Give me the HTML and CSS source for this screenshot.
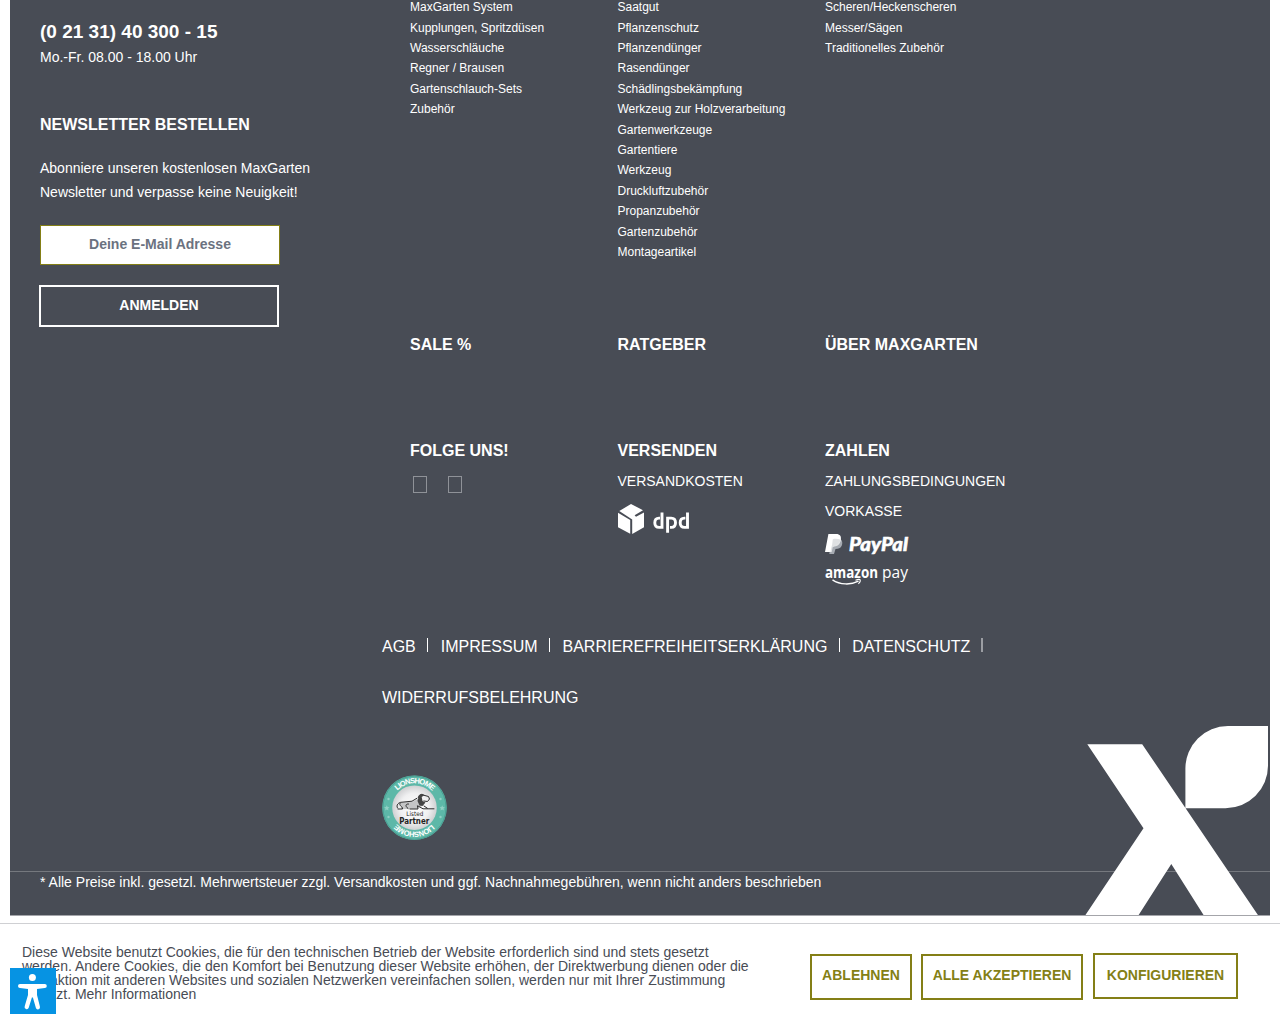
FILE: index.html
```html
<!DOCTYPE html>
<html lang="de">
<head>
<meta charset="utf-8">
<title>MaxGarten</title>
<link rel="stylesheet" href="styles.css">
</head>
<body>
<footer class="footer">
  <div class="footer-main">
    <section class="contact">
      <p class="phone">(0 21 31) 40 300 - 15</p>
      <p class="hours">Mo.-Fr. 08.00 - 18.00 Uhr</p>
      <h3 class="title newsletter-title">NEWSLETTER BESTELLEN</h3>
      <p class="newsletter-text">Abonniere unseren kostenlosen MaxGarten<br>Newsletter und verpasse keine Neuigkeit!</p>
      <input class="email" type="text" placeholder="Deine E-Mail Adresse">
      <button class="submit">ANMELDEN</button>
    </section>
    <div class="content">
      <div class="columns columns-links">
        <ul class="links">
          <li>MaxGarten System</li><li>Kupplungen, Spritzdüsen</li><li>Wasserschläuche</li><li>Regner / Brausen</li><li>Gartenschlauch-Sets</li><li>Zubehör</li>
        </ul>
        <ul class="links">
          <li>Saatgut</li><li>Pflanzenschutz</li><li>Pflanzendünger</li><li>Rasendünger</li><li>Schädlingsbekämpfung</li><li>Werkzeug zur Holzverarbeitung</li><li>Gartenwerkzeuge</li><li>Gartentiere</li><li>Werkzeug</li><li>Druckluftzubehör</li><li>Propanzubehör</li><li>Gartenzubehör</li><li>Montageartikel</li>
        </ul>
        <ul class="links">
          <li>Scheren/Heckenscheren</li><li>Messer/Sägen</li><li>Traditionelles Zubehör</li>
        </ul>
      </div>
      <div class="columns columns-titles">
        <h3 class="title">SALE %</h3>
        <h3 class="title">RATGEBER</h3>
        <h3 class="title">ÜBER MAXGARTEN</h3>
      </div>
      <div class="columns columns-service">
        <div>
          <h3 class="title">FOLGE UNS!</h3>
          <div class="social"><span class="glyph"></span><span class="glyph"></span></div>
        </div>
        <div>
          <h3 class="title">VERSENDEN</h3>
          <p class="service">VERSANDKOSTEN</p>
          <svg class="dpd" width="72" height="32" viewBox="0 0 72 32">
            <path fill="#fff" d="M13 0 25 6.2 16.6 11.2 18 12.8 26 8.4V23.3L14.2 30V15.4L1.3 7 13 0ZM0 8.7 12.2 15.9V29.7L0 23.3Z"/>
            <g fill="none" stroke="#fff" stroke-width="2.9">
              <path d="M44 8.5V23.4H41.2C38.1 23.4 36.8 21.4 36.8 18.7C36.8 15.9 38.4 14.1 41 14.1H42"/>
              <path d="M49.6 28.8V14.1H53.2C56.3 14.1 57.5 16.1 57.5 18.8C57.5 21.8 55.9 23.4 53.4 23.4H52"/>
              <path d="M69.5 8.5V23.4H66.6C63.5 23.4 62.2 21.4 62.2 18.7C62.2 15.9 63.8 14.1 66.4 14.1H67.4"/>
            </g>
          </svg>
        </div>
        <div>
          <h3 class="title">ZAHLEN</h3>
          <p class="service">ZAHLUNGSBEDINGUNGEN</p>
          <p class="service">VORKASSE</p>
          <svg class="paypal" width="86" height="24" viewBox="0 0 86 24">
            <path fill="#a6abb2" d="M5.5 12 14.8 4.8C17.4 6 17.8 9 16.8 11.6C15.8 14.3 13.4 15 10.5 15L9 20H4.3Z"/>
            <path fill="#dfe1e3" d="M5.6 12.9 7.4 5.6 15.6 4.6C15.9 9.2 13.8 12.3 9.5 12.5L7.7 13.3 6.7 18H4.7Z"/>
            <path fill="#fff" d="M3.4 0H11.2C14.9 0 16.5 2.4 15.8 5.4C14.5 9.8 12 11 8.6 11H7L5.3 17.9H0Z"/>
            <path fill="#dfe1e3" d="M7.8 5.2C10 4.5 13.5 4.8 15.8 5.7C15 9.8 12 11.7 7 11.6Z"/>
            <text x="24" y="17.1" textLength="59" lengthAdjust="spacingAndGlyphs" class="paypal-word">PayPal</text>
          </svg>
          <svg class="amazon" width="86" height="22" viewBox="0 0 86 22">
            <text x="0" y="12" textLength="53" lengthAdjust="spacingAndGlyphs" class="amazon-word">amazon</text>
            <text x="57" y="12.3" textLength="26" lengthAdjust="spacingAndGlyphs" class="pay-word">pay</text>
            <path fill="none" stroke="#fff" stroke-width="1.4" d="M7.5 13.8C15 19 26 19.1 33.5 15.2"/>
            <path fill="none" stroke="#fff" stroke-width="1.1" d="M30.5 14.2C32.6 13.4 35 13.4 35.3 14.1C35.6 15 34.5 16.8 33.4 17.8"/>
          </svg>
        </div>
      </div>
      <nav class="legal">
        <span class="legal-item">AGB</span><span class="legal-item">IMPRESSUM</span><span class="legal-item">BARRIEREFREIHEITSERKLÄRUNG</span><span class="legal-item legal-soft">DATENSCHUTZ</span><span class="legal-last">WIDERRUFSBELEHRUNG</span>
      </nav>
      <svg class="badge" width="66" height="66" viewBox="0 0 66 66">
        <defs>
          <radialGradient id="disc"><stop offset="0" stop-color="#fff"/><stop offset=".65" stop-color="#f0f0f1"/><stop offset="1" stop-color="#cfd0d2"/></radialGradient>
          <path id="arc-top" d="M8.3 32.5A24.2 24.2 0 0 1 56.7 32.5"/>
          <path id="arc-bottom" d="M56.7 32.5A24.2 24.2 0 0 1 8.3 32.5"/>
        </defs>
        <circle cx="32.5" cy="32.7" r="32.3" fill="#5db8a8"/>
        <circle cx="32.5" cy="32.7" r="31.6" fill="none" stroke="#499e92" stroke-width="1"/>
        <circle cx="32.5" cy="32.7" r="22.3" fill="url(#disc)"/>
        <text class="ring"><textPath href="#arc-top" startOffset="50%" text-anchor="middle">LIONSHOME</textPath></text>
        <text class="ring"><textPath href="#arc-bottom" startOffset="50%" text-anchor="middle">LIONSHOME</textPath></text>
        <g fill="#91d0c5">
          <path id="star" d="M4.8 30.2 5.6 32 7.5 32.2 6.1 33.5 6.5 35.4 4.8 34.4 3.1 35.4 3.5 33.5 2.1 32.2 4 32Z"/>
          <use href="#star" x="55.4"/>
          <circle cx="6.5" cy="24" r="1.2"/><circle cx="6.5" cy="42" r="1.2"/><circle cx="58.5" cy="24" r="1.2"/><circle cx="58.5" cy="42" r="1.2"/>
        </g>
        <path fill="#c4c5c6" d="M18 27.5 31 26.5 38 22.5 40 31 35 34H19Z"/>
        <path fill="none" stroke="#2d2d2d" stroke-width="1" stroke-linecap="round" stroke-linejoin="round" d="M15.5 33C13.5 30 17 27 20 27.2L30 26.2 35 23.2M18 28.3C16.5 31 21 31.2 20.5 34H16M26 33.5C22.5 31 24 28.5 26.5 29M28 34H36L35.5 31M36 31 41 33.8H52M42 31 45.3 33.2M36.5 22.5C36.5 20 39 18.5 41 20L46.5 21.5 47.5 24 45.5 26.5 41.8 26"/>
        <path fill="#444" d="M37 20.5 40 18.8 42.5 20 39.7 22 40.5 26 43.5 27.5 40.5 31 37.5 30.5 35.5 26Z"/>
        <text x="32.8" y="41.3" text-anchor="middle" class="listed" textLength="17" lengthAdjust="spacingAndGlyphs">Listed</text>
        <text x="32.2" y="48.6" text-anchor="middle" class="partner" textLength="30" lengthAdjust="spacingAndGlyphs">Partner</text>
      </svg>
    </div>
  </div>
  <p class="note">* Alle Preise inkl. gesetzl. Mehrwertsteuer zzgl. Versandkosten und ggf. Nachnahmegebühren, wenn nicht anders beschrieben</p>
  <svg class="mark" width="185" height="190" viewBox="0 0 185 190">
    <path fill="#fff" d="M2.3 18.2H57.2L173.2 189.4H118.8L86.3 138 53.4 189.4H.2L58.5 102.3ZM100.4 82.3V42.5A42.5 42.5 0 0 1 142.9 0H183V39.8A42.5 42.5 0 0 1 140.5 82.3Z"/>
  </svg>
</footer>
<div class="cookie">
  <p class="cookie-text">Diese Website benutzt Cookies, die für den technischen Betrieb der Website erforderlich sind und stets gesetzt<br>werden. Andere Cookies, die den Komfort bei Benutzung dieser Website erhöhen, der Direktwerbung dienen oder die<br>Interaktion mit anderen Websites und sozialen Netzwerken vereinfachen sollen, werden nur mit Ihrer Zustimmung<br>gesetzt. Mehr Informationen</p>
  <div class="cookie-actions">
    <button class="choice decline">ABLEHNEN</button>
    <button class="choice accept">ALLE AKZEPTIEREN</button>
    <button class="choice configure">KONFIGURIEREN</button>
  </div>
</div>
<button class="access" aria-label="Barrierefreiheit">
  <svg width="46" height="46" viewBox="0 0 46 46">
    <circle cx="22.4" cy="9.6" r="3.5" fill="#fff"/>
    <path fill="#fff" d="M10 16H34.8A2 2 0 0 1 34.8 20L27 21V27L29.9 38.5A2.1 2.1 0 0 1 25.9 39.9L22.9 29.5H21.9L18.7 39.7A2.1 2.1 0 0 1 14.7 38.3L18 27V21L10 20A2 2 0 0 1 10 16Z"/>
  </svg>
</button>
</body>
</html>
```

FILE: styles.css
```css
* { box-sizing: border-box; }
html, body { height: 1024px; overflow: hidden; }
body {
  margin: 0;
  background: #fff;
  color: #484c55;
  font-family: "Liberation Sans", Arial, sans-serif;
  font-size: 14px;
}
h3, p, ul { margin: 0; padding: 0; }
button, input { font-family: inherit; border-radius: 0; }
svg { overflow: visible; }

.footer {
  position: relative;
  height: 916px;
  margin: 0 10px;
  overflow: hidden;
  background: #484c55;
  border-bottom: 1px solid #a4a5aa;
  color: #fff;
}
.footer-main { display: flex; height: 871px; padding-left: 30px; }
.contact { width: 342px; padding-top: 19px; }
.title { font-size: 16px; line-height: 24px; font-weight: 700; white-space: nowrap; }
.phone { font-size: 19px; line-height: 26px; font-weight: 700; }
.hours { line-height: 24px; }
.newsletter-title { margin-top: 44px; }
.newsletter-text { margin-top: 19px; line-height: 24px; white-space: nowrap; }
.email {
  display: block;
  width: 240px;
  height: 40px;
  margin-top: 21px;
  padding: 0 10px 2px;
  border: 1px solid #847f16;
  background: #fff;
  font-size: 14px;
  font-weight: 700;
  text-align: center;
}
.email::placeholder { color: #6b7280; opacity: 1; }
.submit {
  display: block;
  width: 240px;
  height: 42px;
  margin: 20px 0 0 -1px;
  padding: 0 0 2px;
  border: 2px solid #fff;
  background: none;
  color: #fff;
  font-size: 14px;
  font-weight: 700;
}

.columns { display: grid; grid-template-columns: repeat(3, 207.5px); margin-left: 28px; }
.columns-links { height: 335.85px; margin-top: -2.85px; }
.links { list-style: none; font-size: 12px; line-height: 20.4px; white-space: nowrap; }
.columns-titles { height: 106px; }
.columns-service { height: 182px; }
.service { line-height: 30px; white-space: nowrap; }
.columns-service .title { height: 27px; }
.social { display: flex; gap: 21px; padding: 10px 0 0 3px; }
.glyph { width: 14px; height: 17px; border: 1px solid #8f9298; }
.dpd { display: block; margin-top: 8px; }
.paypal { display: block; margin-top: 8px; }
.paypal-word { font: italic 900 18px "Lato", sans-serif; fill: #fff; stroke: #fff; stroke-width: .5px; }
.amazon { display: block; margin-top: 8px; }
.amazon-word { font: 700 15.5px "Open Sans", sans-serif; fill: #fff; }
.pay-word { font: 400 17px "Open Sans", sans-serif; fill: #fff; }

.legal {
  display: flex;
  flex-wrap: wrap;
  width: 620px;
  font-size: 16px;
  line-height: 51px;
}
.legal-item { display: flex; align-items: center; }
.legal-item::after {
  content: "";
  width: 1px;
  height: 14px;
  margin: -3px 12.5px 0 11.4px;
  background: #fff;
}
.legal-soft::after { background: #9c9ea3; width: 2px; margin-left: 11px; }
.badge { display: block; margin-top: 52px; }
.ring { font: 700 7.6px "Liberation Sans", sans-serif; letter-spacing: -.9px; fill: #fff; }
.listed { font: 400 6.3px "DejaVu Sans", sans-serif; fill: #222; }
.partner { font: 700 8px "DejaVu Sans", sans-serif; fill: #222; }

.note { height: 44px; padding-left: 30px; border-top: 1px solid #75787e; line-height: 20px; }
.mark { position: absolute; right: 0; bottom: -1px; }

.cookie {
  display: flex;
  justify-content: space-between;
  height: 101px;
  margin-top: 7px;
  padding: 21px 42px 0 22px;
  border-top: 1px solid #cfd0d3;
}
.cookie-text { line-height: 14px; white-space: nowrap; }
.cookie-actions { display: flex; padding-top: 9px; }
.choice {
  height: 46px;
  padding: 0 0 4px;
  border: 2px solid #847f16;
  background: #fff;
  color: #847f16;
  font-size: 14px;
  font-weight: 700;
}
.decline { width: 102px; margin-right: 9px; }
.accept { width: 162px; margin-right: 10px; }
.configure { width: 145px; margin-top: -1px; padding-bottom: 2px; }

.access {
  position: fixed;
  left: 10px;
  bottom: 10px;
  width: 46px;
  height: 46px;
  padding: 0;
  border: 0;
  background: #0693e3;
}
.access svg { display: block; }
```
